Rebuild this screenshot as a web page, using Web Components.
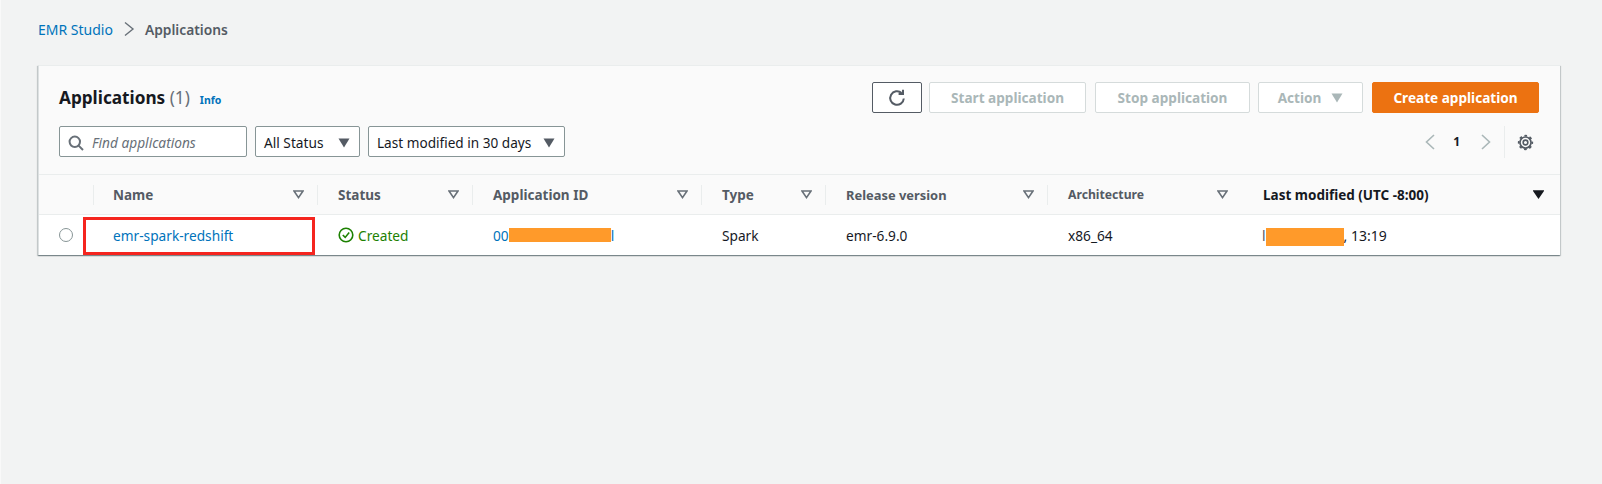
<!DOCTYPE html>
<html>
<head>
<meta charset="utf-8">
<title>Applications</title>
<style>
  html, body { margin: 0; padding: 0; }
  body {
    background: #f2f3f3;
    height: 484px;
    overflow: hidden;
    border-left: 1px solid #f9f9f9;
    font-family: "Noto Sans", "Open Sans", sans-serif;
    font-size: 13.7px;
    color: #16191f;
  }
  .page { padding: 18px 42px 0 37px; display: flex; flex-direction: column; }
  .toolbar-top { display: flex; align-items: center; justify-content: space-between; padding: 16px 21px 0 20px; }
  .actions { display: flex; gap: 9px; }
  .toolbar-bottom { display: flex; align-items: center; justify-content: space-between; padding: 12px 0 0 20px; height: 33px; }
  .filters { display: flex; gap: 8px; }
</style>
</head>
<body>
<template id="tpl-breadcrumb">
  <style>
    :host { display: flex; align-items: center; height: 22px; margin-bottom: 25px; font-size: 14px; font-weight: 400; }
    a { color: #0073bb; text-decoration: none; }
    svg { margin: 0 10px 0 10px; }
    span { color: #545b64; font-weight: 600; font-size: 13.8px; }
  </style>
  <a href="#"><slot name="root"></slot></a>
  <svg width="12" height="16" viewBox="0 0 12 16" fill="none" stroke="#687078" stroke-width="1.4"><path d="M2 1.5 L10 8 L2 14.5"/></svg>
  <span><slot></slot></span>
</template>

<template id="tpl-card">
  <style>
    :host { display: block; background: #fafafa; border-top: 1px solid #eaeded; border-left: 1px solid #dde1e2; box-shadow: 0 1px 1px 0 rgba(0,28,36,.3), 1px 1px 1px 0 rgba(0,28,36,.15), -1px 1px 1px 0 rgba(0,28,36,.15); width: 1521px; }
  </style>
  <slot></slot>
</template>

<template id="tpl-title">
  <style>
    :host { display: flex; align-items: baseline; gap: 10px; }
    h2 { margin: 0; font-size: 17.2px; font-weight: 700; color: #16191f; line-height: 30px; }
    small { font-size: 17.2px; font-weight: 400; color: #687078; }
    a { font-size: 10.5px; font-weight: 700; color: #0073bb; text-decoration: none; }
  </style>
  <h2><slot></slot> <small><slot name="count"></slot></small></h2>
  <a href="#">Info</a>
</template>

<template id="tpl-button">
  <style>
    :host { display: inline-flex; }
    button {
      font: 700 13.6px "Noto Sans", "Open Sans", sans-serif;
      height: 31px; padding: 0; width: var(--w, auto);
      display: flex; align-items: center; justify-content: center; gap: 10px;
      background: #fff; color: #aab7b8; border: 1px solid #d5dbdb; border-radius: 2px;
    }
    :host([kind="primary"]) button { background: #ec7211; border-color: #ec7211; color: #fff; }
    :host([kind="icon"]) button { background: #fff; border-color: #545b64; color: #545b64; }
    svg { display: block; }
  </style>
  <button><slot></slot></button>
</template>

<template id="tpl-search">
  <style>
    :host { display: flex; align-items: center; gap: 8px; width: 188px; height: 31px; box-sizing: border-box; padding: 2px 0 0 8px; background: #fff; border: 1px solid #879596; border-radius: 2px; color: #687078; font-style: italic; }
    svg { flex: none; }
  </style>
  <svg width="16" height="16" viewBox="0 0 16 16" fill="none" stroke="#687078" stroke-width="2"><circle cx="6.8" cy="6.8" r="5.2"/><path d="M10.6 10.6 L15 15"/></svg>
  <slot></slot>
</template>

<template id="tpl-select">
  <style>
    :host { display: flex; align-items: center; justify-content: space-between; height: 31px; box-sizing: border-box; padding: 2px 9px 0 8px; background: #fff; border: 1px solid #879596; border-radius: 2px; color: #16191f; width: var(--w, auto); font-size: var(--fs, 13.7px); }
    svg { flex: none; }
  </style>
  <slot></slot>
  <svg width="12" height="10" viewBox="0 0 12 10" fill="#545b64"><path d="M0.5 0.5 H11.5 L6 9.5 Z"/></svg>
</template>

<template id="tpl-pager">
  <style>
    :host { display: flex; align-items: center; height: 33px; color: #16191f; font-size: 12px; font-weight: 700; }
    .prev { margin-right: 18px; }
    .next { margin-left: 21px; }
    .sep { width: 1px; height: 32px; background: #eaeded; margin-left: 13px; }
    .gear { margin: 2px 26px 0 12px; }
  </style>
  <svg class="prev" width="10" height="16" viewBox="0 0 10 16" fill="none" stroke="#aab7b8" stroke-width="1.6"><path d="M9 1 L1.5 8 L9 15"/></svg>
  <slot></slot>
  <svg class="next" width="10" height="16" viewBox="0 0 10 16" fill="none" stroke="#aab7b8" stroke-width="1.6"><path d="M1 1 L8.5 8 L1 15"/></svg>
  <div class="sep"></div>
  <svg class="gear" width="17" height="17" viewBox="0 0 16 16" fill="none" stroke="#545b64"><circle cx="8" cy="8" r="5.2" stroke-width="1.6"/><circle cx="8" cy="8" r="6.4" stroke-width="1.6" stroke-dasharray="2.5 2.53" stroke-dashoffset="1.25"/><circle cx="8" cy="8" r="2.2" stroke-width="1.5"/></svg>
</template>

<template id="tpl-table">
  <style>
    :host { display: block; margin-top: 16px; border-top: 1px solid #eaeded; }
  </style>
  <slot></slot>
</template>

<template id="tpl-head">
  <style>
    :host { display: grid; grid-template-columns: 54px 224px 155px 229px 124px 222px 195px 1fr; height: 39px; background: #fafafa; border-bottom: 1px solid #eaeded; align-items: center; }
  </style>
  <slot></slot>
</template>

<template id="tpl-th">
  <style>
    :host { display: flex; align-items: center; justify-content: space-between; height: 20px; box-sizing: border-box; padding: 0 var(--pr, 13px) 0 var(--pl, 20px); border-left: 1px solid #eaeded; font-size: var(--fs, 13.5px); font-weight: 700; color: #545b64; }
    :host([sorted]) { color: #16191f; border-left-color: transparent; padding-right: 16px; }
    svg { flex: none; }
    :host([sorted]) path { fill: #16191f; stroke: #16191f; }
  </style>
  <span><slot></slot></span>
  <svg width="11" height="9" viewBox="0 0 11 9" fill="none" stroke="#687078" stroke-width="1.6"><path d="M1 1 H10 L5.5 7.6 Z"/></svg>
</template>

<template id="tpl-row">
  <style>
    :host { display: grid; grid-template-columns: 54px 224px 155px 229px 124px 222px 195px 1fr; height: 40px; background: #fff; align-items: stretch; position: relative; color: #16191f; }
    .radio { width: 14px; height: 14px; align-self: center; border-radius: 50%; background: #fff; border: 1px solid #879596; margin-left: 20px; box-sizing: border-box; }
  </style>
  <div class="radio"></div>
  <slot></slot>
</template>

<template id="tpl-td">
  <style>
    :host { display: flex; align-items: center; padding-left: var(--pl, 21px); }
  </style>
  <slot></slot>
</template>

<template id="tpl-status">
  <style>
    :host { display: inline-flex; align-items: center; gap: 4px; color: #1d8102; }
  </style>
  <svg width="16" height="16" viewBox="0 0 16 16" fill="none" stroke="#1d8102" stroke-width="1.6"><circle cx="8" cy="8" r="6.8"/><path d="M4.8 8 L7.2 10.4 L11.2 5.6"/></svg>
  <slot></slot>
</template>

<template id="tpl-redact">
  <style>
    /* orange scribble laid over the hidden part of a value */
    :host { display: block; flex: none; background: #ff9a2a; width: var(--w); height: var(--h); margin-top: var(--mt, 0); }
  </style>
</template>

<template id="tpl-highlight">
  <style>
    :host { position: absolute; display: block; left: 44px; top: 2px; width: 232px; height: 38px; box-sizing: border-box; border: 3px solid #f5251f; pointer-events: none; }
  </style>
</template>

<div class="page">
  <emr-breadcrumb><span slot="root">EMR Studio</span>Applications</emr-breadcrumb>
  <emr-card>
    <div class="toolbar-top">
      <emr-title>Applications<span slot="count">(1)</span></emr-title>
      <div class="actions">
        <emr-button kind="icon" style="--w:50px;margin-right:-2px">
          <svg width="18" height="18" viewBox="0 0 18 18" fill="none" stroke="#545b64" stroke-width="2"><path d="M13.6 4 A6.8 6.8 0 1 0 15.8 9.5"/><path d="M15 0.8 V5 H10.6"/></svg>
        </emr-button>
        <emr-button style="--w:157px">Start application</emr-button>
        <emr-button style="--w:155px;margin-right:-1px">Stop application</emr-button>
        <emr-button style="--w:105px">Action
          <svg width="12" height="10" viewBox="0 0 12 10" fill="#aab7b8"><path d="M0.5 0.5 H11.5 L6 9.5 Z"/></svg>
        </emr-button>
        <emr-button kind="primary" style="--w:167px">Create application</emr-button>
      </div>
    </div>
    <div class="toolbar-bottom">
      <div class="filters">
        <emr-search>Find applications</emr-search>
        <emr-select style="--w:105px">All Status</emr-select>
        <emr-select style="--w:197px;--fs:13.6px">Last modified in 30 days</emr-select>
      </div>
      <emr-pager>1</emr-pager>
    </div>
    <emr-table>
      <emr-head>
        <div></div>
        <emr-th style="--pl:19px">Name</emr-th>
        <emr-th>Status</emr-th>
        <emr-th>Application ID</emr-th>
        <emr-th>Type</emr-th>
        <emr-th style="--fs:12.9px">Release version</emr-th>
        <emr-th style="--fs:12.2px;--pr:14px">Architecture</emr-th>
        <emr-th sorted>Last modified (UTC -8:00)</emr-th>
      </emr-head>
      <emr-row>
        <emr-td style="color:#0073bb;--pl:20px">emr-spark-redshift</emr-td>
        <emr-td><emr-status>Created</emr-status></emr-td>
        <emr-td style="color:#0073bb">00<emr-redact style="--w:102px;--h:14px"></emr-redact>l</emr-td>
        <emr-td>Spark</emr-td>
        <emr-td>emr-6.9.0</emr-td>
        <emr-td>x86_64</emr-td>
        <emr-td style="color:#545b64;--pl:20px">l<emr-redact style="--w:78px;--h:18px;--mt:4px"></emr-redact><span style="color:#16191f;font-size:14px">,&nbsp;13:19</span></emr-td>
        <emr-highlight></emr-highlight>
      </emr-row>
    </emr-table>
  </emr-card>
</div>

<script>
  // every element here just clones its template into an open shadow root
  const elements = {
    'emr-breadcrumb': 'tpl-breadcrumb',
    'emr-card': 'tpl-card',
    'emr-title': 'tpl-title',
    'emr-button': 'tpl-button',
    'emr-search': 'tpl-search',
    'emr-select': 'tpl-select',
    'emr-pager': 'tpl-pager',
    'emr-table': 'tpl-table',
    'emr-head': 'tpl-head',
    'emr-th': 'tpl-th',
    'emr-row': 'tpl-row',
    'emr-td': 'tpl-td',
    'emr-status': 'tpl-status',
    'emr-redact': 'tpl-redact',
    'emr-highlight': 'tpl-highlight'
  };

  Object.keys(elements).forEach(name => {
    const tpl = document.getElementById(elements[name]);
    customElements.define(name, class extends HTMLElement {
      constructor() {
        super();
        this.attachShadow({ mode: 'open' });
        this.shadowRoot.appendChild(tpl.content.cloneNode(true));
      }
    });
  });
</script>
</body>
</html>
